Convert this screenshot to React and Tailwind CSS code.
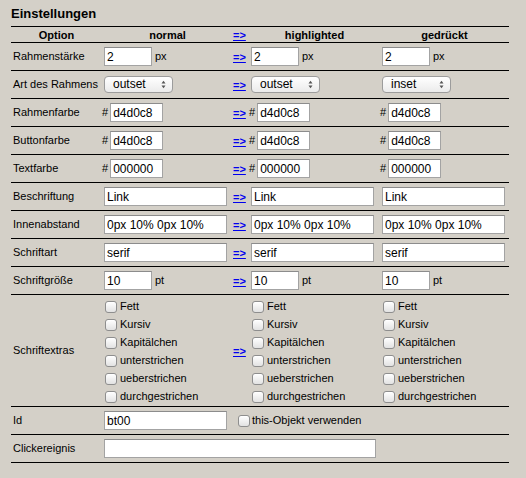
import React from "react";

const font = { fontFamily: '"Liberation Sans", Arial, sans-serif' };

function Arrow() {
  return (
    <a className="text-[11px] font-bold leading-[12px] text-[#0000ee] underline cursor-pointer whitespace-nowrap">
      =&gt;
    </a>
  );
}

function Field({ value, w = "w-[123px]" }) {
  return (
    <input
      readOnly
      value={value}
      className={`${w} h-[19px] border border-[#a3a3a3] border-t-[#8c8c8c] bg-white pl-[2px] text-[12px] text-black outline-none`}
    />
  );
}

function Box() {
  return (
    <span className="inline-block w-[12px] h-[12px] shrink-0 rounded-[3px] border border-[#8e8e8e] bg-gradient-to-b from-white to-[#e2e2e2] shadow-[inset_0_1px_0_#fff]" />
  );
}

function Select({ value }) {
  return (
    <div className="relative flex w-[69px] h-[17px]">
      <select
        defaultValue={value}
        className="block w-full h-[17px] appearance-none rounded-[4px] border border-[#9c9c9c] bg-gradient-to-b from-white to-[#ebebeb] py-0 pl-[8px] text-[12px] leading-[15px] text-black outline-none"
      >
        <option>outset</option>
        <option>inset</option>
        <option>solid</option>
      </select>
      <svg className="pointer-events-none absolute right-[7px] top-[4px]" width="5" height="9" viewBox="0 0 5 9">
        <path d="M0.5 3.5 L2.5 0.8 L4.5 3.5 Z" fill="#555" />
        <path d="M0.5 5.5 L2.5 8.2 L4.5 5.5 Z" fill="#555" />
      </svg>
    </div>
  );
}

function Row({ label, children, h = "h-[28px]" }) {
  return (
    <div className={`grid grid-cols-[91px_131px_16px_131px_129px] grid-rows-[100%] items-center border-b border-black overflow-hidden ${h}`}>
      <div className="pl-[2px] text-[11px] leading-[13px] text-black whitespace-nowrap">{label}</div>
      {children}
    </div>
  );
}

function Triple({ render }) {
  return (
    <>
      <div className="flex items-center">{render(0)}</div>
      <div className="flex items-center">
        <Arrow />
      </div>
      <div className="flex items-center">{render(1)}</div>
      <div className="flex items-center">{render(2)}</div>
    </>
  );
}

const unitCell = (val, unit) => (
  <div className="flex items-center pl-[2px]">
    <Field value={val} w="w-[48px]" />
    <span className="ml-[3px] text-[11px] text-black">{unit}</span>
  </div>
);

const hashCell = (val) => (
  <div className="flex items-center">
    <span className="text-[11px] text-black">#</span>
    <div className="ml-[2px] flex">
      <Field value={val} w="w-[53px]" />
    </div>
  </div>
);

const textCell = (val) => (
  <div className="flex pl-[2px]">
    <Field value={val} />
  </div>
);

const extras = ["Fett", "Kursiv", "Kapitälchen", "unterstrichen", "ueberstrichen", "durchgestrichen"];

function Extras() {
  return (
    <div className="flex flex-col pl-[3px] pt-[2px]">
      {extras.map((e) => (
        <div key={e} className="flex items-center h-[18px] gap-[3px]">
          <Box />
          <span className="text-[11px] text-black">{e}</span>
        </div>
      ))}
    </div>
  );
}

export default function App() {
  const selects = ["outset", "outset", "inset"];
  return (
    <div className="min-h-screen w-full bg-[#d4d0c8]" style={font}>
      <div className="ml-[11px] w-[498px]">
        <div className="h-[26px] pt-[6px] text-[13px] font-bold leading-[16px] text-black">Einstellungen</div>

        <div className="border-t border-black">
          <div className="grid grid-cols-[91px_131px_16px_131px_129px] items-center border-b border-black h-[16px] text-[11px] font-bold text-black">
            <div className="text-center">Option</div>
            <div className="text-center">normal</div>
            <div className="flex items-center">
              <Arrow />
            </div>
            <div className="text-center">highlighted</div>
            <div className="text-center">gedrückt</div>
          </div>

          <Row label="Rahmenstärke">
            <Triple render={() => unitCell("2", "px")} />
          </Row>
          <Row label="Art des Rahmens">
            <Triple
              render={(i) => (
                <div className="flex pl-[2px]">
                  <Select value={selects[i]} />
                </div>
              )}
            />
          </Row>
          <Row label="Rahmenfarbe">
            <Triple render={() => hashCell("d4d0c8")} />
          </Row>
          <Row label="Buttonfarbe">
            <Triple render={() => hashCell("d4d0c8")} />
          </Row>
          <Row label="Textfarbe">
            <Triple render={() => hashCell("000000")} />
          </Row>
          <Row label="Beschriftung">
            <Triple render={() => textCell("Link")} />
          </Row>
          <Row label="Innenabstand">
            <Triple render={() => textCell("0px 10% 0px 10%")} />
          </Row>
          <Row label="Schriftart">
            <Triple render={() => textCell("serif")} />
          </Row>
          <Row label="Schriftgröße">
            <Triple render={() => unitCell("10", "pt")} />
          </Row>
          <Row label="Schriftextras" h="h-[112px]">
            <Triple render={() => <Extras />} />
          </Row>
          <Row label="Id">
            <div className="flex pl-[2px]">
              <Field value="bt00" />
            </div>
            <div className="col-span-3 flex items-center gap-[2px] pl-[5px]">
              <Box />
              <span className="text-[11px] text-black">this-Objekt verwenden</span>
            </div>
          </Row>
          <Row label="Clickereignis">
            <div className="col-span-3 flex pl-[2px]">
              <Field value="" w="w-[272px]" />
            </div>
          </Row>
        </div>
      </div>
    </div>
  );
}
